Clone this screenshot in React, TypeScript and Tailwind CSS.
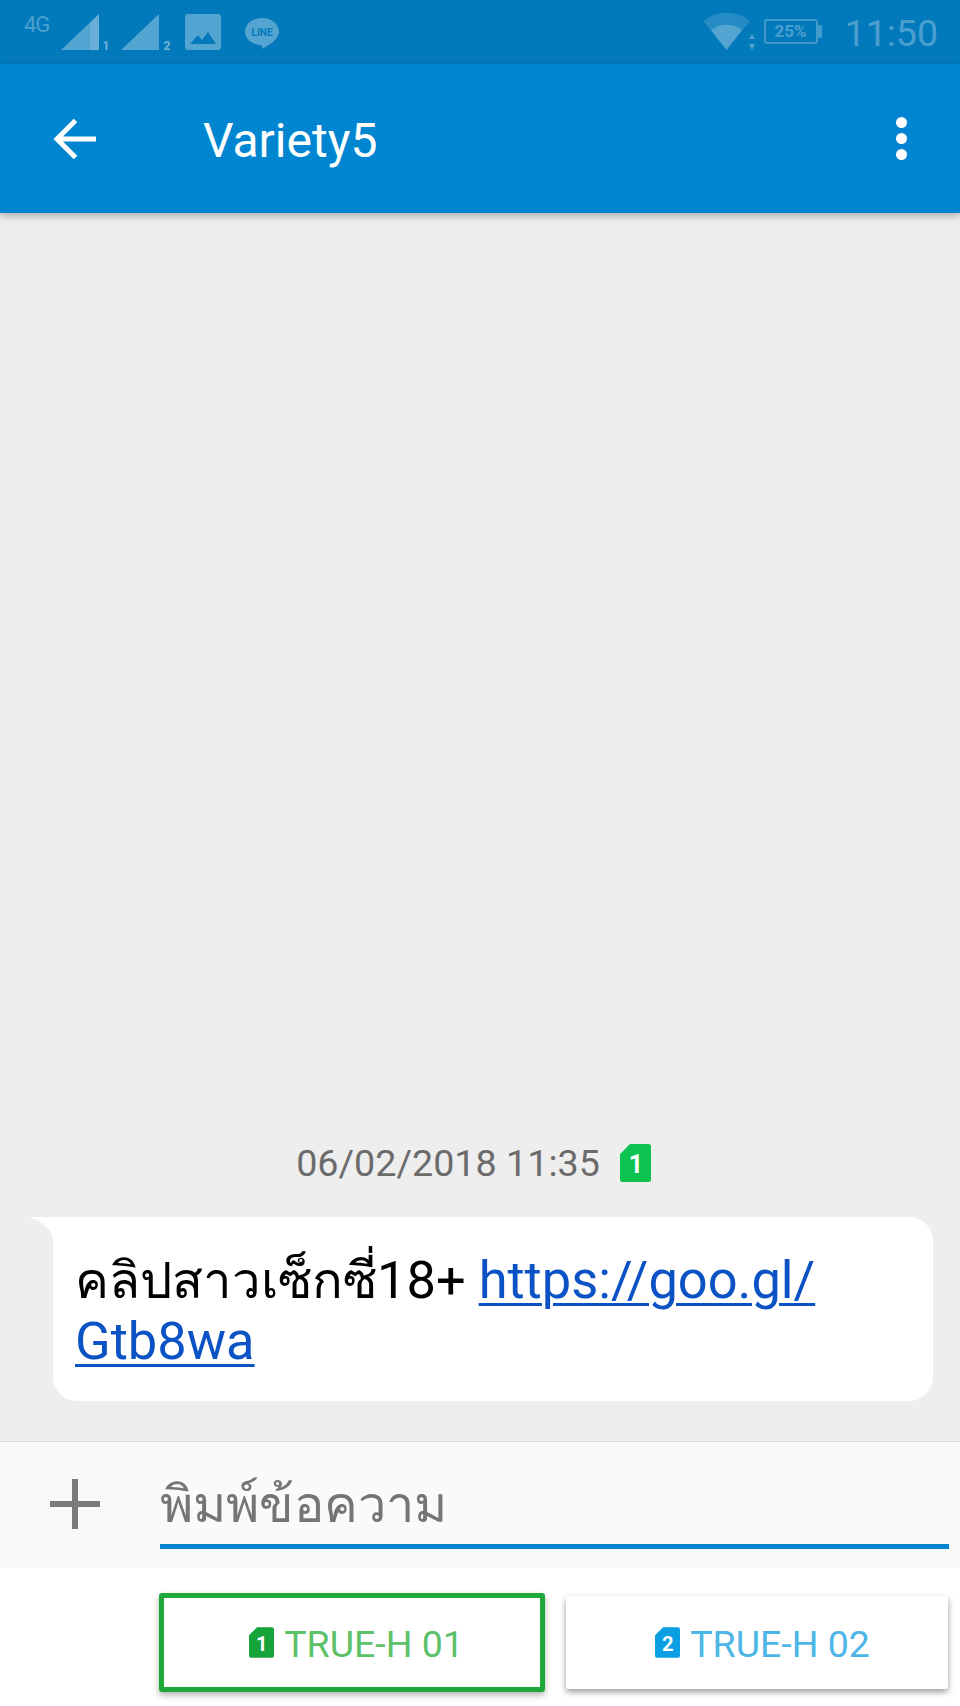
import React from "react";

function SimIcon({ fill, label, className }: { fill: string; label: string; className: string }) {
  return (
    <svg viewBox="0 0 31 38" className={className}>
      <path
        d="M10 0H28.5A2.5 2.5 0 0 1 31 2.5V35.5A2.5 2.5 0 0 1 28.5 38H2.5A2.5 2.5 0 0 1 0 35.5V10Z"
        fill={fill}
      />
      <text
        x="16"
        y="29"
        textAnchor="middle"
        fontSize="25"
        fontWeight="700"
        fontFamily="Roboto, sans-serif"
        fill="#ffffff"
      >
        {label}
      </text>
    </svg>
  );
}

function StatusBar() {
  return (
    <div className="flex h-[64px] shrink-0 items-start bg-[#0279bb] font-[Roboto,sans-serif] text-white/30">
      <span className="ml-[24px] mt-[12px] text-[22px] leading-[26px] tracking-[-1px]">4G</span>
      <svg viewBox="0 0 50 44" className="ml-[12px] mt-[13px] h-[44px] w-[50px]">
        <path d="M0 37L38 1V37Z" fill="#ffffff" fillOpacity="0.32" />
        <path d="M29 10L38 1V37H29Z" fill="#ffffff" fillOpacity="0.12" />
        <text x="45" y="37" textAnchor="middle" fontSize="12" fontWeight="700" fill="#ffffff" fillOpacity="0.45">1</text>
      </svg>
      <svg viewBox="0 0 52 44" className="ml-[10px] mt-[13px] h-[44px] w-[52px]">
        <path d="M0 37L38 1V37Z" fill="#ffffff" fillOpacity="0.32" />
        <text x="46" y="37" textAnchor="middle" fontSize="12" fontWeight="700" fill="#ffffff" fillOpacity="0.45">2</text>
      </svg>
      <svg viewBox="0 0 36 36" className="ml-[12px] mt-[14px] h-[36px] w-[36px]">
        <path
          fillRule="evenodd"
          d="M3 0H33A3 3 0 0 1 36 3V33A3 3 0 0 1 33 36H3A3 3 0 0 1 0 33V3A3 3 0 0 1 3 0ZM5 30H31L23 18L17 26L13 21Z"
          fill="#ffffff"
          fillOpacity="0.32"
        />
      </svg>
      <svg viewBox="0 0 34 32" className="ml-[24px] mt-[18px] h-[32px] w-[34px]">
        <path
          d="M17 0C26.4 0 34 6 34 13.5C34 20 27 26 17 31C17.500 28 17 27 15 26.900C6.500 26.300 0 20.600 0 13.500C0 6 7.600 0 17 0Z"
          fill="#ffffff"
          fillOpacity="0.32"
        />
        <text x="17" y="17.500" textAnchor="middle" fontSize="10" fontWeight="700" fill="#0279bb">LINE</text>
      </svg>
      <div className="flex-1" />
      <svg viewBox="0 0 52 38" className="mt-[13px] h-[38px] w-[52px]">
        <path d="M0 8C14 -3 33 -3 47 8L23.500 37Z" fill="#ffffff" fillOpacity="0.14" />
        <path d="M8 17C17 10 30 10 39 17L23.500 37Z" fill="#ffffff" fillOpacity="0.22" />
        <path d="M49 21L52 26H46ZM49 37L52 31H46Z" fill="#ffffff" fillOpacity="0.3" />
      </svg>
      <div className="ml-[9px] mt-[19px] flex items-center">
        <div className="flex h-[25px] w-[54px] items-center justify-center rounded-[3px] border-2 border-white/25 text-[17px] font-bold leading-none">
          25%
        </div>
        <div className="h-[13px] w-[4px] rounded-r-[2px] bg-white/25" />
      </div>
      <span className="ml-[23px] mr-[22px] mt-[11px] text-[37.5px] leading-[44px]">11:50</span>
    </div>
  );
}

function Header() {
  return (
    <header className="relative z-10 flex h-[149px] shrink-0 items-center bg-[#0086d1] shadow-[0_3px_7px_rgba(0,0,0,0.28)]">
      <svg viewBox="0 0 44 42" className="ml-[53px] h-[42px] w-[44px]">
        <path d="M43 21H4M22.500 2.500L4 21L22.500 39.500" fill="none" stroke="#ffffff" strokeWidth="5" />
      </svg>
      <h1 className="ml-[106px] pt-[5px] font-[Roboto,sans-serif] text-[48px] font-normal leading-[56px] text-white">
        Variety5
      </h1>
      <div className="ml-auto mr-[53px] flex flex-col gap-[5px]">
        <span className="size-[11px] rounded-full bg-white" />
        <span className="size-[11px] rounded-full bg-white" />
        <span className="size-[11px] rounded-full bg-white" />
      </div>
    </header>
  );
}

function Message() {
  return (
    <main className="flex flex-1 flex-col justify-end bg-[#eeeeee] pb-[40px] font-[Roboto,'Noto_Sans',sans-serif]">
      <div className="flex items-center justify-center gap-[20px] pr-[13px] pb-[32px]">
        <span className="text-[37.7px] leading-[44px] text-[#6b6b6b]">06/02/2018 11:35</span>
        <SimIcon fill="#0cc34f" label="1" className="h-[38px] w-[31px]" />
      </div>
      <div className="relative ml-[53px] mr-[27px] h-[184px] rounded-[24px] rounded-tl-none bg-white pl-[22px] pt-[33px] text-[52.4px] leading-[61px] text-black">
        <svg viewBox="0 0 26 26" className="absolute -left-[25px] top-0 h-[26px] w-[26px]">
          <path d="M0 0H26V26C26 14 14 4 0 0Z" fill="#ffffff" />
        </svg>
        <span className="text-[50.8px]">คลิปสาวเซ็กซี่</span>18+{" "}
        <a href="#" className="text-[#0b52c4] underline decoration-[3px] underline-offset-[5px]">
          https://goo.gl/
          <br />
          Gtb8wa
        </a>
      </div>
    </main>
  );
}

function Composer() {
  return (
    <div className="flex h-[127px] shrink-0 border-t border-[#dddddd] bg-[#fafafa] pl-[50px] pr-[11px]">
      <svg viewBox="0 0 50 50" className="mt-[37px] h-[50px] w-[50px] shrink-0">
        <path d="M0 25H50M25 0V50" fill="none" stroke="#7b7b7b" strokeWidth="6" />
      </svg>
      <div className="ml-[60px] mt-[21px] flex h-[86px] flex-1 items-center border-b-[5px] border-[#0086d1] pt-[1px] font-[Roboto,'Noto_Sans',sans-serif] text-[50.5px] leading-[61px] text-[#757575]">
        พิมพ์ข้อความ
      </div>
    </div>
  );
}

function SimButtons() {
  return (
    <div className="flex h-[138px] shrink-0 items-center gap-[21px] bg-white pl-[159px] pr-[12px] pt-[11px] font-[Roboto,sans-serif] text-[37.5px]">
      <button className="flex h-[99px] w-[386px] items-center justify-center gap-[10px] rounded-[3px] border-[5px] border-[#1fa83a] bg-white pl-[9px] text-[#5cc169] shadow-[0_3px_6px_rgba(0,0,0,0.3)]">
        <SimIcon fill="#15a33a" label="1" className="h-[31px] w-[25px]" />
        <span className="pt-[3px]">TRUE-H 01</span>
      </button>
      <button className="flex h-[93px] flex-1 items-center justify-center gap-[10px] rounded-[2px] bg-white pl-[11px] text-[#4db6e6] shadow-[0_3px_6px_rgba(0,0,0,0.4)]">
        <SimIcon fill="#0a9fe3" label="2" className="h-[31px] w-[25px]" />
        <span className="pt-[3px]">TRUE-H 02</span>
      </button>
    </div>
  );
}

export default function App() {
  return (
    <div className="flex h-[1706px] w-[960px] flex-col overflow-hidden">
      <StatusBar />
      <Header />
      <Message />
      <Composer />
      <SimButtons />
    </div>
  );
}
